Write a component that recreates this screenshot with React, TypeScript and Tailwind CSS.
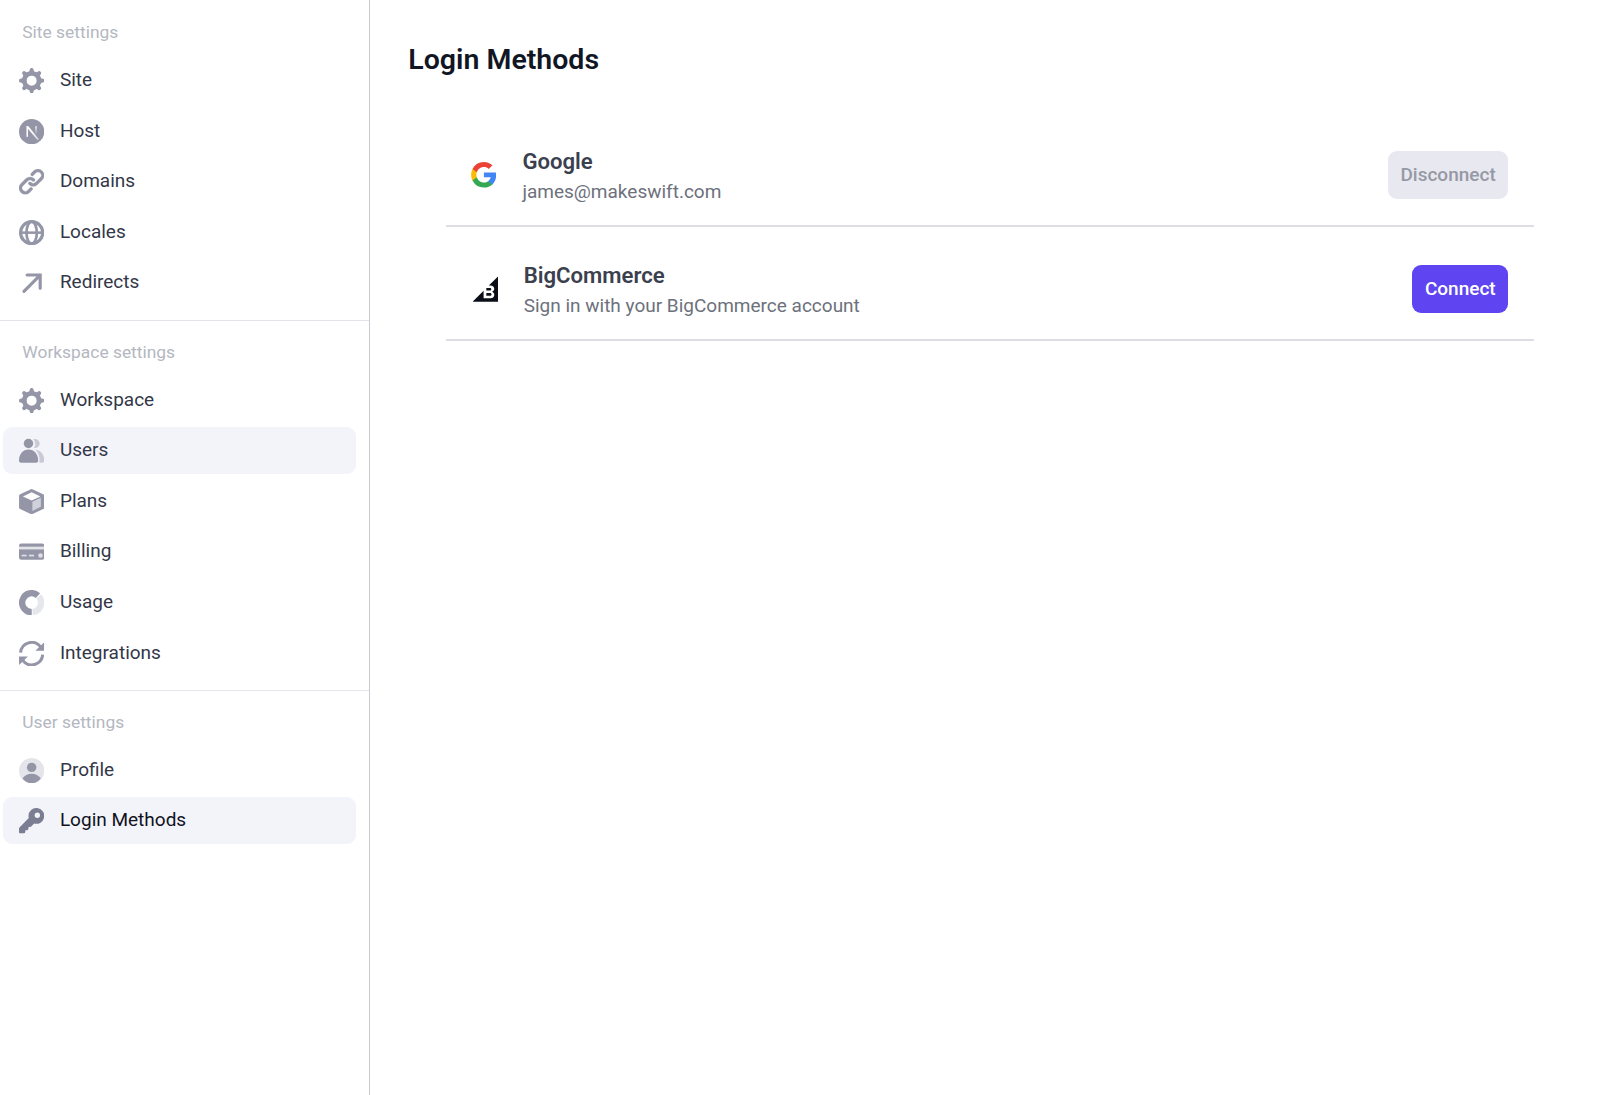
import React from 'react';

type IconProps = { children: React.ReactNode; viewBox?: string };

function Icon({ children, viewBox = '0 0 24 24' }: IconProps) {
  return (
    <svg viewBox={viewBox} className="size-[25.3px] shrink-0" fill="currentColor" aria-hidden="true">
      {children}
    </svg>
  );
}

const toothAngles = [0, 45, 90, 135, 180, 225, 270, 315];

const GearIcon = () => (
  <Icon>
    <circle cx="12" cy="12" r="7" fill="none" stroke="currentColor" strokeWidth="4.5" />
    {toothAngles.map((a) => (
      <path
        key={a}
        d="M9.5 4.2 L10.3 1.2 Q10.6 0 12 0 Q13.4 0 13.7 1.2 L14.5 4.2 Z"
        transform={`rotate(${a} 12 12)`}
      />
    ))}
  </Icon>
);

const HostIcon = () => (
  <Icon>
    <defs>
      <linearGradient id="stem" x1="0" y1="6.5" x2="0" y2="14" gradientUnits="userSpaceOnUse">
        <stop offset="0" stopColor="#fff" />
        <stop offset="1" stopColor="#fff" stopOpacity="0.1" />
      </linearGradient>
      <linearGradient id="slash" x1="12" y1="12" x2="18.4" y2="20" gradientUnits="userSpaceOnUse">
        <stop offset="0" stopColor="#fff" />
        <stop offset="1" stopColor="#fff" stopOpacity="0.55" />
      </linearGradient>
    </defs>
    <circle cx="12" cy="12" r="12" />
    <rect x="7.1" y="6.9" width="1.4" height="10" fill="#fff" />
    <path d="M7.1 6.9h1.8l10 12.3-1.3 1L7.1 7.7z" fill="url(#slash)" />
    <rect x="15.5" y="6.9" width="1.4" height="7.6" fill="url(#stem)" />
  </Icon>
);

const LinkIcon = () => (
  <Icon viewBox="2 2 16 16">
    <path
      fillRule="evenodd"
      stroke="currentColor"
      strokeWidth="0.15"
      d="M12.586 4.586a2 2 0 112.828 2.828l-3 3a2 2 0 01-2.828 0 1 1 0 00-1.414 1.414 4 4 0 005.656 0l3-3a4 4 0 00-5.656-5.656l-1.5 1.5a1 1 0 101.414 1.414l1.5-1.5zm-5 5a2 2 0 012.828 0 1 1 0 101.414-1.414 4 4 0 00-5.656 0l-3 3a4 4 0 105.656 5.656l1.5-1.5a1 1 0 10-1.414-1.414l-1.5 1.5a2 2 0 11-2.828-2.828l3-3z"
    />
  </Icon>
);

const GlobeIcon = () => (
  <Icon>
    <g fill="none" stroke="currentColor">
      <circle cx="12" cy="12" r="10.5" strokeWidth="3" />
      <ellipse cx="12" cy="12" rx="4.9" ry="10.5" strokeWidth="2.6" />
      <path d="M1.5 12h21" strokeWidth="2.4" />
    </g>
  </Icon>
);

const ArrowIcon = () => (
  <Icon>
    <path
      d="M7.700 3.800h12.400v12.500M19.600 4.300 4.700 19.300"
      fill="none"
      stroke="currentColor"
      strokeWidth="3"
      strokeLinecap="round"
      strokeLinejoin="miter"
    />
  </Icon>
);

const UsersIcon = () => (
  <Icon>
    <g fill="#c8cad5">
      <path d="M13.6 1.300a4.300 4.300 0 1 1 .6 8.100 6.600 6.600 0 0 0-.6-8.100z" />
      <path d="M15.600 11.200c4.800.2 8.400 4.500 8.400 10.300 0 1.200-.7 1.900-1.700 1.900h-3c.6-4.600-.3-9-3.700-12.200z" />
    </g>
    <circle cx="9" cy="5.200" r="4.500" />
    <path d="M9.100 10.900c-5.200 0-9.100 4.300-9.100 10.500 0 1.300.7 2 1.900 2h14.400c1.200 0 1.900-.7 1.900-2 0-6.200-3.900-10.500-9.100-10.500z" />
  </Icon>
);

const PlansIcon = () => (
  <Icon>
    <path
      d="M12 1.800 22.200 6.500v11L12 22.200 1.800 17.500v-11z"
      stroke="currentColor"
      strokeWidth="3.500"
      strokeLinejoin="round"
    />
    <path d="M3.700 7 12 3.100 20.300 7 12 11z" fill="#fcfcfd" />
    <path d="M12.700 12.200 20.700 8.300v8.500l-8 4z" fill="#d0d2db" />
  </Icon>
);

const BillingIcon = () => (
  <Icon>
    <rect x="0" y="4.300" width="24" height="15.400" rx="2.200" />
    <rect x="0" y="7.300" width="24" height="2.600" fill="#e3e4ea" />
    <rect x="2.500" y="14.900" width="4.700" height="1.600" fill="#dfe0e7" />
    <rect x="9.400" y="14.900" width="4.900" height="1.600" fill="#dfe0e7" />
    <circle cx="20.400" cy="15.700" r="2.100" fill="#dfe0e7" />
  </Icon>
);

const UsageIcon = () => (
  <Icon>
    <g fill="none" strokeWidth="6">
      <path d="M12.900 21a9 9 0 0 0 5.800-14.900" stroke="#e6e7ec" />
      <path d="M12.100 21A9 9 0 1 1 18 5.300" stroke="currentColor" />
    </g>
  </Icon>
);

const SyncIcon = () => (
  <Icon>
    <path
      d="M1.500 11A10.500 10.500 0 0 1 20.400 5.600M22.500 13A10.500 10.500 0 0 1 3.600 18.400"
      fill="none"
      stroke="currentColor"
      strokeWidth="2.900"
    />
    <path d="M24 1.200v8.100h-8.500zM0 22.800v-8.100h8.500z" />
  </Icon>
);

const ProfileIcon = () => (
  <Icon>
    <circle cx="12" cy="12" r="12" fill="#e4e5ea" />
    <circle cx="12" cy="8.900" r="4.500" />
    <path d="M3.300 19.500C5.200 16.600 8.300 15 12 15s6.800 1.600 8.700 4.500C18.600 22.300 15.500 24 12 24s-6.600-1.700-8.700-4.500z" />
  </Icon>
);

const KeyIcon = () => (
  <Icon viewBox="2 2 16 16">
    <path
      fillRule="evenodd"
      d="M8 7a5 5 0 113.610 4.804l-1.903 1.903A1 1 0 019 14H8v1a1 1 0 01-1 1H6v1a1 1 0 01-1 1H2.600a.6.6 0 01-.6-.6V15a1 1 0 01.293-.707L8.196 8.390A5.002 5.002 0 018 7zm5.600-2.100a1.700 1.700 0 100 3.400 1.700 1.700 0 000-3.400z"
    />
  </Icon>
);

const GoogleLogo = () => (
  <svg viewBox="0 0 17.64 18" className="-ml-[0.6px] mr-[0.6px] h-[25.5px] w-[25.3px] shrink-0" aria-hidden="true">
    <path fill="#4285F4" d="M17.640 9.205c0-.639-.057-1.252-.164-1.841H9v3.481h4.844a4.140 4.140 0 0 1-1.796 2.716v2.259h2.908c1.702-1.567 2.684-3.875 2.684-6.615z" />
    <path fill="#34A853" d="M9 18c2.430 0 4.467-.806 5.956-2.180l-2.908-2.259c-.806.540-1.837.860-3.048.860-2.344 0-4.328-1.584-5.036-3.711H.957v2.332A8.997 8.997 0 0 0 9 18z" />
    <path fill="#FBBC05" d="M3.964 10.710A5.410 5.410 0 0 1 3.682 9c0-.593.102-1.170.282-1.710V4.958H.957A8.996 8.996 0 0 0 0 9c0 1.452.348 2.827.957 4.042l3.007-2.332z" />
    <path fill="#EA4335" d="M9 3.580c1.321 0 2.508.454 3.440 1.345l2.582-2.580C13.463.891 11.426 0 9 0A8.997 8.997 0 0 0 .957 4.958L3.964 7.290C4.672 5.163 6.656 3.580 9 3.580z" />
  </svg>
);

const BigCommerceLogo = () => (
  <svg viewBox="0 0 24 24" className="mt-[0.6px] ml-[0.9px] size-[25.7px] shrink-0" fill="#0b0d17" aria-hidden="true">
    <path d="M12.645 13.663h3.027c.861 0 1.406-.474 1.406-1.235 0-.717-.545-1.234-1.406-1.234h-3.027c-.1 0-.187.086-.187.172v2.125c.015.1.086.172.187.172zm0 4.896h3.128c.961 0 1.535-.488 1.535-1.350 0-.746-.545-1.350-1.535-1.350h-3.128c-.1 0-.187.087-.187.173v2.340c.015.115.086.187.187.187zM23.720.053l-8.953 8.930h1.464c2.281 0 3.630 1.435 3.630 3 0 1.235-.832 2.140-1.722 2.541-.143.058-.143.259.014.316 1.033.402 1.765 1.480 1.765 2.742 0 1.780-1.190 3.202-3.500 3.202h-6.342c-.1 0-.187-.086-.187-.172V13.850L.062 23.640c-.130.130-.043.359.143.359h23.631a.16.16 0 0 0 .158-.158V.182c.043-.158-.158-.244-.273-.130z" />
  </svg>
);

type Item = { label: string; icon: React.ReactNode; state?: 'hover' | 'active' };

const sections: { title: string; items: Item[] }[] = [
  {
    title: 'Site settings',
    items: [
      { label: 'Site', icon: <GearIcon /> },
      { label: 'Host', icon: <HostIcon /> },
      { label: 'Domains', icon: <LinkIcon /> },
      { label: 'Locales', icon: <GlobeIcon /> },
      { label: 'Redirects', icon: <ArrowIcon /> },
    ],
  },
  {
    title: 'Workspace settings',
    items: [
      { label: 'Workspace', icon: <GearIcon /> },
      { label: 'Users', icon: <UsersIcon />, state: 'hover' },
      { label: 'Plans', icon: <PlansIcon /> },
      { label: 'Billing', icon: <BillingIcon /> },
      { label: 'Usage', icon: <UsageIcon /> },
      { label: 'Integrations', icon: <SyncIcon /> },
    ],
  },
  {
    title: 'User settings',
    items: [
      { label: 'Profile', icon: <ProfileIcon /> },
      { label: 'Login Methods', icon: <KeyIcon />, state: 'active' },
    ],
  },
];

const itemStyles = {
  idle: 'text-[#9496a7]',
  hover: 'bg-[#f3f4fa] text-[#9496a7]',
  active: 'bg-[#f3f4fa] text-[#7b7d92]',
};

function NavItem({ label, icon, state }: Item) {
  return (
    <li className={`flex h-[46.6px] items-center rounded-[9px] pl-[15.5px] ${itemStyles[state ?? 'idle']}`}>
      <span className="flex pt-[1px]">{icon}</span>
      <span
        className={`pb-[0.4px] pl-[15.8px] text-[19px] leading-6 ${state === 'active' ? 'text-[#10121f]' : 'text-[#333748]'}`}
      >
        {label}
      </span>
    </li>
  );
}

function Sidebar() {
  return (
    <nav className="w-[370px] shrink-0 border-r border-[#c8c9d1] pt-px">
      {sections.map(({ title, items }) => (
        <section key={title} className="border-b border-[#e4e5eb] pb-[13.6px] last:border-b-0">
          <h2 className="h-14 pt-[19px] pl-[22.3px] text-[17.4px] leading-6 text-[#b4b7bf]">{title}</h2>
          <ul className="flex flex-col gap-1 pr-[13.3px] pl-[3.3px]">
            {items.map((item) => (
              <NavItem key={item.label} {...item} />
            ))}
          </ul>
        </section>
      ))}
    </nav>
  );
}

type MethodProps = { logo: React.ReactNode; name: string; detail: string; action: string; disabled?: boolean };

function Method({ logo, name, detail, action, disabled }: MethodProps) {
  return (
    <li className="flex h-[114px] items-center border-b-2 border-[#dcdee2] px-[25.3px] pt-[13px]">
      {logo}
      <div className="flex-1 pt-[3px] pl-[25.3px]">
        <h3 className="text-[22.15px] leading-[30px] font-semibold text-[#3a404d]">{name}</h3>
        <p className="text-[19px] leading-[31px] text-[#6d717c]">{detail}</p>
      </div>
      <button
        disabled={disabled}
        className={`h-[47.5px] rounded-[9px] px-[12.5px] pb-[0.4px] text-[19px] font-medium ${
          disabled ? 'bg-[#e7e8f0] text-[#9699a5]' : 'bg-[#5f45f2] text-white'
        }`}
      >
        {action}
      </button>
    </li>
  );
}

export default function App() {
  return (
    <div className="flex h-[1095px] w-[1600px] overflow-hidden bg-white font-['Roboto',sans-serif]">
      <Sidebar />
      <main className="flex-1 pt-[42px] pr-[66.5px] pl-[38.3px]">
        <h1 className="text-[28.5px] leading-9 font-semibold text-[#111624]">Login Methods</h1>
        <ul className="mt-[34.5px] ml-[38.2px]">
          <Method logo={<GoogleLogo />} name="Google" detail="james@makeswift.com" action="Disconnect" disabled />
          <Method
            logo={<BigCommerceLogo />}
            name="BigCommerce"
            detail="Sign in with your BigCommerce account"
            action="Connect"
          />
        </ul>
      </main>
    </div>
  );
}
